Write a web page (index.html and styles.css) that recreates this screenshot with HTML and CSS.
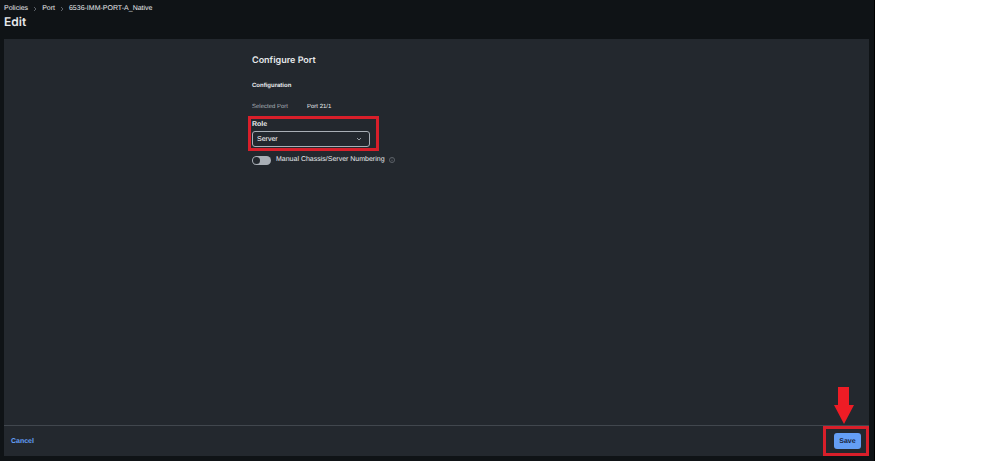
FILE: index.html
```
<!DOCTYPE html>
<html lang="en">
<head>
  <meta charset="UTF-8" />
  <meta name="viewport" content="width=device-width, initial-scale=1.0" />
  <title>Edit Port Policy</title>
  <link rel="stylesheet" href="styles.css">
</head>
<body>
  <div class="app">
    <header class="header">
      <nav class="breadcrumb">
        <a href="#">Policies</a>
        <svg class="sep" viewBox="0 0 4 6"><path d="M1 1l2 2-2 2" /></svg>
        <a href="#">Port</a>
        <svg class="sep" viewBox="0 0 4 6"><path d="M1 1l2 2-2 2" /></svg>
        <a href="#">6536-IMM-PORT-A_Native</a>
      </nav>
      <h1>Edit</h1>
    </header>

    <main class="card">
      <form class="form">
        <h2>Configure Port</h2>
        <h3>Configuration</h3>
        <div class="info">
          <span class="info-label">Selected Port</span>
          <span>Port 21/1</span>
        </div>
        <div class="field">
          <label for="role">Role</label>
          <div class="select-wrap">
            <select id="role">
              <option>Server</option>
            </select>
            <svg class="chevron" viewBox="0 0 6 4"><path d="M1 1l2 2 2-2" /></svg>
          </div>
          <div class="highlight"></div>
        </div>
        <div class="toggle-row">
          <input type="checkbox" id="manual" class="toggle">
          <label for="manual">Manual Chassis/Server Numbering</label>
          <svg class="info-icon" viewBox="0 0 7 7"><circle cx="3.5" cy="3.5" r="3" /><path d="M3.5 3.1v2M3.5 1.8v.6" /></svg>
        </div>
      </form>

      <footer class="actions">
        <button type="button" class="cancel">Cancel</button>
        <div class="save-wrap">
          <button type="button" class="save">Save</button>
          <svg class="arrow" viewBox="0 0 20 37"><path d="M4 0h11v18h5L10 37 0 18h4z" /></svg>
        </div>
      </footer>
    </main>
  </div>
</body>
</html>
```
FILE: styles.css
```
* {
  box-sizing: border-box;
}
body {
  margin: 0;
  background: #fff;
  color: #e6e8eb;
  font-family: "Liberation Sans", Arial, sans-serif;
  font-size: 7px;
  line-height: 12px;
  text-rendering: geometricPrecision;
}
.app {
  display: flex;
  flex-direction: column;
  min-height: 100vh;
  margin-right: 123px;
  padding: 3px 5px 5px 4px;
  background: #0f1316;
  border-right: 1px solid #000;
}
.header {
  height: 36px;
}
.breadcrumb {
  display: flex;
  align-items: center;
  gap: 5px;
}
.breadcrumb a {
  color: inherit;
  text-decoration: none;
}
.sep {
  width: 4px;
  height: 6px;
  fill: none;
  stroke: #6f757c;
  stroke-width: 0.8;
}
h1, h2, h3 {
  margin: 0;
}
h1, h2 {
  font-family: Inter, sans-serif;
  font-weight: 600;
}
h1 {
  font-size: 12px;
  line-height: 14px;
}
.card {
  flex: 1;
  display: flex;
  flex-direction: column;
  background: #23282e;
}
.form {
  flex: 1;
  width: 100%;
  max-width: 369px;
  margin: 0 auto;
  padding-top: 16px;
}
h2 {
  font-size: 9px;
  line-height: 12px;
}
h3 {
  margin-top: 13px;
  font-size: 6px;
  line-height: 12px;
  font-weight: 600;
}
.info {
  display: flex;
  margin-top: 9px;
  font-size: 6px;
}
.info-label {
  width: 55px;
  color: #a9afb6;
}
.field {
  position: relative;
  width: 118px;
  margin-top: 6px;
}
.field label {
  display: block;
  font-weight: 600;
}
.select-wrap {
  position: relative;
}
select {
  display: block;
  width: 100%;
  height: 16px;
  padding: 1px 4px 0;
  appearance: none;
  background: #23282e;
  border: 1px solid #a9afb6;
  border-radius: 3px;
  color: #fff;
  font: inherit;
  text-rendering: inherit;
}
.chevron {
  position: absolute;
  right: 8px;
  top: 6px;
  width: 6px;
  height: 4px;
  fill: none;
  stroke: #b4bac0;
  stroke-width: 0.8;
}
/* red callout around the field */
.highlight {
  position: absolute;
  inset: -3px -9px -4px -4px;
  border: 3px solid #d81f2a;
  pointer-events: none;
}
.toggle-row {
  display: flex;
  align-items: center;
  gap: 4px;
  margin-top: 7px;
}
.toggle {
  display: flex;
  align-items: center;
  width: 19px;
  height: 9px;
  margin: 0 1px 0 0;
  padding: 0 1px;
  appearance: none;
  background: #a9afb6;
  border-radius: 5px;
}
.toggle::before {
  content: "";
  width: 7px;
  height: 7px;
  border-radius: 50%;
  background: #23282e;
}
.toggle:checked {
  justify-content: flex-end;
}
.info-icon {
  width: 6px;
  height: 6px;
  fill: none;
  stroke: #8b9198;
  stroke-width: 0.6;
}
.actions {
  display: flex;
  align-items: center;
  justify-content: space-between;
  padding-left: 7px;
  border-top: 1px solid #41474e;
}
button {
  border: none;
  font: inherit;
  font-weight: 600;
  text-rendering: inherit;
  cursor: pointer;
}
.cancel {
  padding: 2px 0 0;
  background: none;
  color: #649ef5;
}
.save-wrap {
  position: relative;
  padding: 4px 5px 4px 8px;
  border: 3px solid #d81f2a;
}
.save {
  display: block;
  width: 27px;
  height: 16px;
  padding: 2px 0 0;
  background: #649ef5;
  border-radius: 3px;
  color: #17243c;
}
.arrow {
  position: absolute;
  right: 12px;
  bottom: 100%;
  width: 20px;
  height: 37px;
  margin-bottom: 5px;
  fill: #ee1c25;
}
```
